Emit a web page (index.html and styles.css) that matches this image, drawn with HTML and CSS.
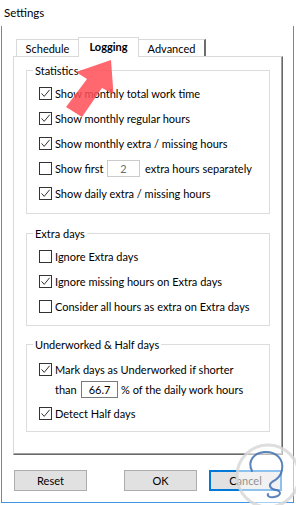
FILE: index.html
```html
<!DOCTYPE html>
<html>
<head>
<meta charset="utf-8">
<link rel="stylesheet" href="styles.css">
</head>
<body>
<div class="title">Settings</div>
<div class="client">
  <div class="tabs">
    <div class="tab t-schedule">Schedule</div>
    <div class="tab t-logging active">Logging</div>
    <div class="tab t-advanced">Advanced</div>
  </div>
  <div class="pane">
    <div class="group g1">
      <span class="gtitle">Statistics</span>
      <div class="row"><svg class="cb" viewBox="0 0 13 13"><rect x=".5" y=".5" width="12" height="12" fill="#fff" stroke="#333"/><path d="M2.6 6.4l2.6 3 5.4-6.6" fill="none" stroke="#333"/></svg><span>Show monthly total work time</span></div>
      <div class="row"><svg class="cb" viewBox="0 0 13 13"><rect x=".5" y=".5" width="12" height="12" fill="#fff" stroke="#333"/><path d="M2.6 6.4l2.6 3 5.4-6.6" fill="none" stroke="#333"/></svg><span>Show monthly regular hours</span></div>
      <div class="row"><svg class="cb" viewBox="0 0 13 13"><rect x=".5" y=".5" width="12" height="12" fill="#fff" stroke="#333"/><path d="M2.6 6.4l2.6 3 5.4-6.6" fill="none" stroke="#333"/></svg><span>Show monthly extra / missing hours</span></div>
      <div class="row"><svg class="cb" viewBox="0 0 13 13"><rect x=".5" y=".5" width="12" height="12" fill="#fff" stroke="#333"/></svg><span class="lab-first">Show first</span><span class="num num-dis">2</span><span class="after-first">extra hours separately</span></div>
      <div class="row"><svg class="cb" viewBox="0 0 13 13"><rect x=".5" y=".5" width="12" height="12" fill="#fff" stroke="#333"/><path d="M2.6 6.4l2.6 3 5.4-6.6" fill="none" stroke="#333"/></svg><span>Show daily extra / missing hours</span></div>
    </div>
    <div class="group g2">
      <span class="gtitle">Extra days</span>
      <div class="row"><svg class="cb" viewBox="0 0 13 13"><rect x=".5" y=".5" width="12" height="12" fill="#fff" stroke="#333"/></svg><span>Ignore Extra days</span></div>
      <div class="row"><svg class="cb" viewBox="0 0 13 13"><rect x=".5" y=".5" width="12" height="12" fill="#fff" stroke="#333"/><path d="M2.6 6.4l2.6 3 5.4-6.6" fill="none" stroke="#333"/></svg><span>Ignore missing hours on Extra days</span></div>
      <div class="row"><svg class="cb" viewBox="0 0 13 13"><rect x=".5" y=".5" width="12" height="12" fill="#fff" stroke="#333"/></svg><span>Consider all hours as extra on Extra days</span></div>
    </div>
    <div class="group g3">
      <span class="gtitle">Underworked &amp; Half days</span>
      <div class="row r-mark"><svg class="cb" viewBox="0 0 13 13"><rect x=".5" y=".5" width="12" height="12" fill="#fff" stroke="#333"/><path d="M2.6 6.4l2.6 3 5.4-6.6" fill="none" stroke="#333"/></svg><span>Mark days as Underworked if shorter</span></div>
      <div class="row r-than"><span class="lab-than">than</span><span class="num num-pct">66.7</span><span>% of the daily work hours</span></div>
      <div class="row r-detect"><svg class="cb" viewBox="0 0 13 13"><rect x=".5" y=".5" width="12" height="12" fill="#fff" stroke="#333"/><path d="M2.6 6.4l2.6 3 5.4-6.6" fill="none" stroke="#333"/></svg><span>Detect Half days</span></div>
    </div>
  </div>
  <div class="buttons">
    <div class="btn">Reset</div>
    <div class="btn ok">OK</div>
    <div class="btn cancel">Cancel</div>
  </div>
</div>
<svg class="overlay" width="296" height="505" viewBox="0 0 296 505">
  <polygon class="arrow" points="111,60 113.5,94 102,88 82,117 66,107 87,79 76,72"/>
  <circle cx="268" cy="476" r="31" fill="#ffffff" fill-opacity="0.55" stroke="#d6d6d6" stroke-width="3" stroke-opacity="0.8"/>
  <path d="M252 471 C247 461 254 453 264 452 C276 451 284 459 282 470 C281 477 276 480 272 482 C268 485 270 489 276 490 C282 491 281 496 274 497 C270 498 267 496 268 494" fill="none" stroke="#3f6fb2" stroke-width="2" stroke-opacity="0.85" stroke-linecap="round"/>
</svg>
</body>
</html>
```
FILE: styles.css
```css
* { box-sizing: border-box; }
html, body { margin: 0; padding: 0; }
body {
  width: 296px;
  height: 505px;
  overflow: hidden;
  background: #fff;
  font-family: Lato, "Liberation Sans", sans-serif;
  font-size: 11px;
  color: #000;
  position: relative;
}
.title {
  height: 26px;
  line-height: 26px;
  padding-left: 4px;
  font-size: 11.5px;
}
.client {
  margin-left: 1px;
  width: 293px;
  height: 477px;
  border: 1px solid #3d95e4;
  border-top: none;
}
.tabs {
  display: flex;
  align-items: flex-end;
  height: 30px;
  padding-left: 14px;
}
.tab {
  height: 17px;
  border: 1px solid #d9d9d9;
  border-bottom: none;
  background: #fff;
  display: flex;
  align-items: center;
  justify-content: center;
}
.t-schedule { width: 63px; }
.t-logging {
  width: 61px;
  margin-left: -1px;
  height: 20px;
  margin-bottom: -1px;
  padding-bottom: 2px;
  font-weight: bold;
  position: relative;
  z-index: 1;
}
.t-advanced {
  width: 68px;
  margin-left: -1px;
  border-right: 2px solid #6d6d6d;
}
.pane {
  margin-left: 11px;
  width: 270px;
  height: 399px;
  border-top: 1px solid #d9d9d9;
  border-left: 1px solid #d9d9d9;
  border-right: 1px solid #696969;
  border-bottom: 1px solid #696969;
  box-shadow: inset -1px -1px 0 #a0a0a0;
  padding: 13px 12px 0;
}
.group {
  border: 1px solid #dcdcdc;
  padding: 0 0 7px 12px;
  display: flex;
  flex-direction: column;
}
.gtitle {
  align-self: flex-start;
  background: #fff;
  padding: 0 2px;
  height: 15px;
  line-height: 15px;
  margin: -8px 0 3px -6px;
}
.g2 { margin-top: 19px; padding-bottom: 6px; }
.g3 { margin-top: 18px; padding-bottom: 5px; }
.row {
  display: flex;
  align-items: center;
  height: 25px;
  white-space: nowrap;
}
.cb {
  width: 13px;
  height: 13px;
  flex: none;
  margin-right: 3px;
}
.lab-first { width: 52px; }
.num {
  height: 17px;
  display: flex;
  align-items: center;
  justify-content: center;
  border: 1px solid #7a7a7a;
}
.num-dis {
  width: 33px;
  border-color: #cccccc;
  color: #6d6d6d;
}
.after-first { margin-left: 5px; }
.r-mark { height: 24px; margin-top: 2px; }
.r-than { height: 17px; padding-left: 16px; }
.lab-than { width: 26px; }
.num-pct { width: 37px; margin-right: 3px; }
.r-detect { margin-top: 3px; }
.buttons {
  display: flex;
  margin-top: 15px;
  padding: 0 11px 0 12px;
}
.btn {
  width: 73px;
  height: 21px;
  background: #e1e1e1;
  border: 1px solid #adadad;
  display: flex;
  align-items: center;
  justify-content: center;
}
.ok { margin-left: auto; margin-right: 12px; }
.cancel { border: 2px solid #0078d7; }
.overlay {
  position: absolute;
  left: 0;
  top: 0;
  pointer-events: none;
}
.arrow {
  fill: #ff4d55;
  fill-opacity: 0.85;
}
```
